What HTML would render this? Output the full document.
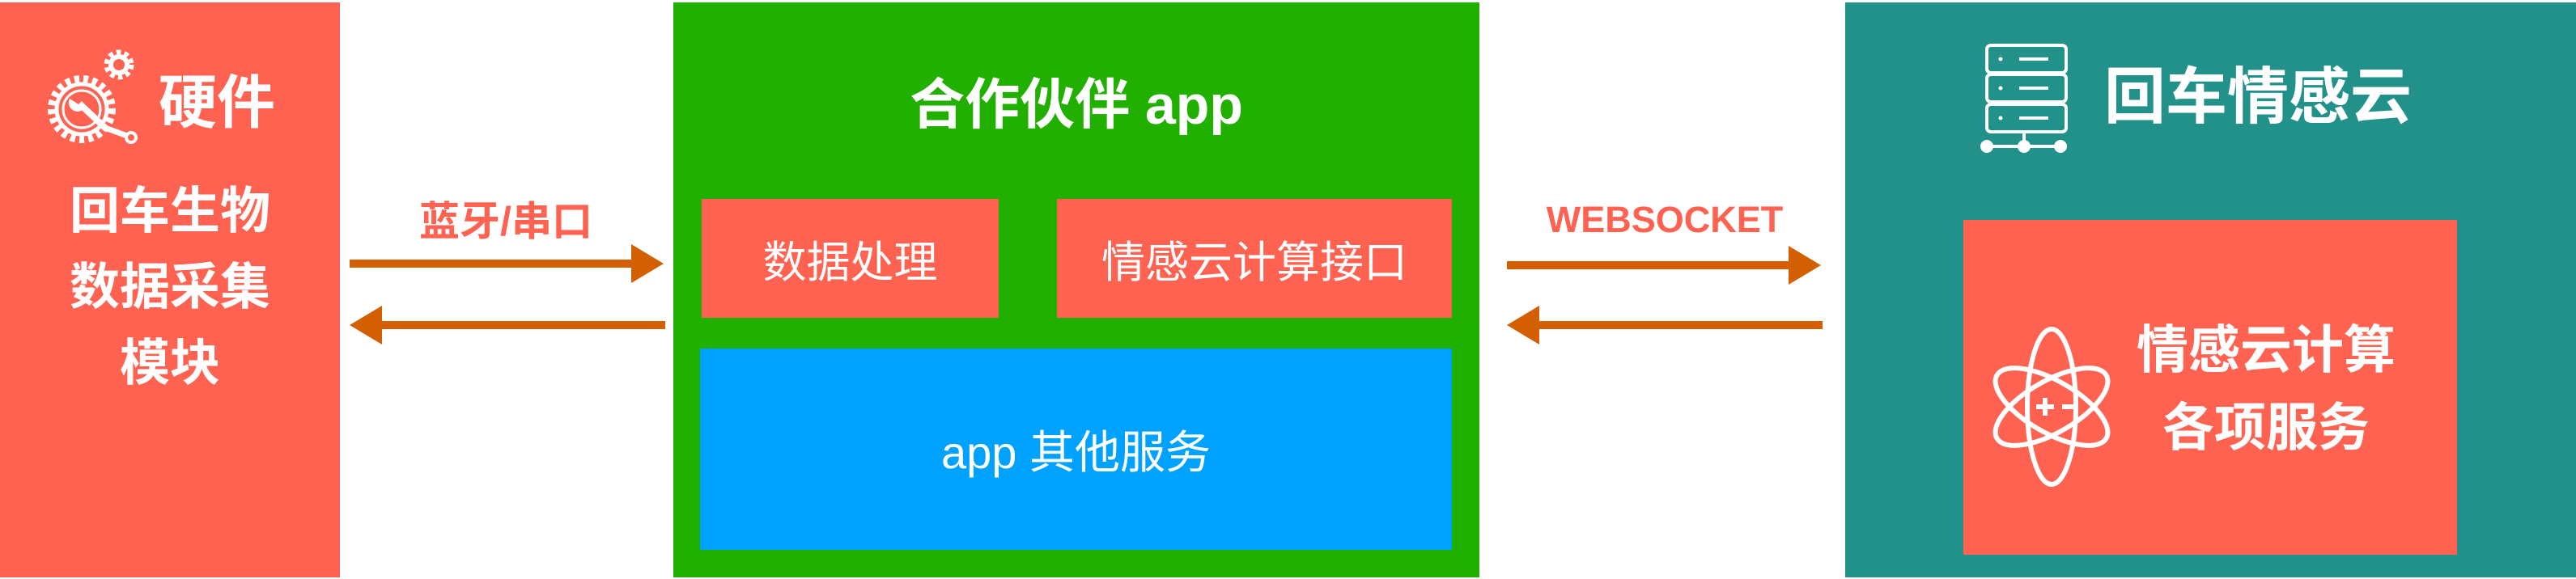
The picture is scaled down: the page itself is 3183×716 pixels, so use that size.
<!DOCTYPE html>
<html><head><meta charset="utf-8"><style>
*{margin:0;padding:0;box-sizing:border-box}
body{width:3183px;height:716px;background:#fff;position:relative;overflow:hidden;font-family:"Liberation Sans","Noto Sans CJK SC",sans-serif;color:#fff}
.a{position:absolute}
.c{display:flex;align-items:center;justify-content:center;text-align:center}
</style></head><body>
<div class="a" style="left:0;top:3px;width:420px;height:711px;background:#FF6250"></div>
<svg class="a" style="left:55px;top:55px" width="120" height="125" viewBox="55 55 120 125">
<g fill="none" stroke="#fff">
<circle cx="101" cy="135" r="37" stroke-width="10" stroke-dasharray="6 5"/>
<circle cx="101" cy="135" r="31" stroke-width="5"/>
<circle cx="101" cy="135" r="23" stroke-width="3"/>
<circle cx="147" cy="80" r="14" stroke-width="9" stroke-dasharray="5 4"/>
<circle cx="147" cy="80" r="10" stroke-width="6"/>
<path d="M98 128 L132 160" stroke-width="8"/>
<path d="M130 158 L157 168" stroke-width="7"/>
<circle cx="162" cy="170" r="6" stroke-width="4"/>
</g>
<path d="M86 122 a11 11 0 0 0 16 14 l-5-7 z" fill="#fff"/>
</svg>
<div class="a" style="left:196px;top:88px;font-size:72px;font-weight:bold;line-height:80px">硬件</div>
<div class="a" style="left:0;top:215px;width:420px;text-align:center;font-size:62px;line-height:94px;font-weight:bold">回车生物<br>数据采集<br>模块</div>

<div class="a c" style="left:432px;top:240px;width:386px;height:60px;color:#FF6250;font-size:50px;font-weight:bold">蓝牙/串口</div>
<svg class="a" style="left:432px;top:300px" width="390" height="130">
<rect x="0" y="21" width="350" height="10" fill="#D45F00"/><path d="M348 2 L388 26 L348 50Z" fill="#D45F00"/>
<rect x="38" y="97" width="352" height="10" fill="#D45F00"/><path d="M40 78 L0 102 L40 126Z" fill="#D45F00"/>
</svg>

<div class="a" style="left:832px;top:3px;width:996px;height:711px;background:#21B000"></div>
<div class="a c" style="left:832px;top:80px;width:996px;height:86px;font-size:68px;font-weight:bold">合作伙伴 app</div>
<div class="a c" style="left:867px;top:246px;width:367px;height:147px;background:#FF6250;font-size:54px">数据处理</div>
<div class="a c" style="left:1306px;top:246px;width:488px;height:147px;background:#FF6250;font-size:54px">情感云计算接口</div>
<div class="a c" style="left:865px;top:431px;width:929px;height:249px;background:#00A2FF;font-size:56px">app 其他服务</div>

<div class="a c" style="left:1862px;top:242px;width:390px;height:60px;color:#FF6250;font-size:45px;font-weight:bold">WEBSOCKET</div>
<svg class="a" style="left:1862px;top:300px" width="392" height="130">
<rect x="0" y="23" width="350" height="10" fill="#D45F00"/><path d="M348 4 L388 28 L348 52Z" fill="#D45F00"/>
<rect x="38" y="97" width="352" height="10" fill="#D45F00"/><path d="M40 78 L0 102 L40 126Z" fill="#D45F00"/>
</svg>

<div class="a" style="left:2280px;top:3px;width:903px;height:711px;background:#22918A"></div>
<svg class="a" style="left:2445px;top:50px" width="125" height="140">
<g fill="none" stroke="#fff" stroke-width="4">
<rect x="10" y="6" width="98" height="34" rx="5"/><rect x="10" y="42" width="98" height="34" rx="5"/><rect x="10" y="79" width="98" height="34" rx="5"/>
<path d="M50 23h36M50 59h36M50 96h36M56 113v18M10 131h98"/></g>
<g fill="#fff"><circle cx="27" cy="23" r="2.5"/><circle cx="27" cy="59" r="2.5"/><circle cx="27" cy="96" r="2.5"/>
<circle cx="10" cy="131" r="8"/><circle cx="56" cy="131" r="8"/><circle cx="101" cy="131" r="8"/></g>
</svg>
<div class="a" style="left:2600px;top:78px;font-size:76px;font-weight:bold;line-height:86px">回车情感云</div>
<div class="a" style="left:2426px;top:272px;width:610px;height:414px;background:#FF6250"></div>
<svg class="a" style="left:2450px;top:395px" width="170" height="215" viewBox="-12 -5 170 215">
<g fill="none" stroke="#fff" stroke-width="6">
<ellipse cx="73" cy="103" rx="30" ry="96"/>
<ellipse cx="73" cy="103" rx="32" ry="78" transform="rotate(60 73 103)"/>
<ellipse cx="73" cy="103" rx="32" ry="78" transform="rotate(-60 73 103)"/>
<path d="M54 103h22M65 92v22M86 103h16"/></g>
</svg>
<div class="a" style="left:2620px;top:385px;width:360px;text-align:center;font-size:64px;line-height:96px;font-weight:bold">情感云计算<br>各项服务</div>
</body></html>
